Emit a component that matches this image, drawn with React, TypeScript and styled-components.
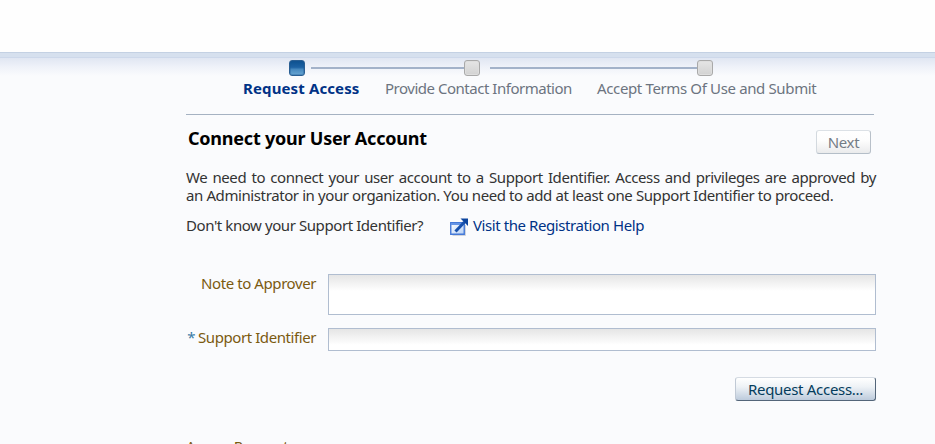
import React from "react";
import styled, { createGlobalStyle } from "styled-components";

const GlobalStyle = createGlobalStyle`
  *, *::before, *::after { box-sizing: border-box; }
  html, body { margin: 0; height: 100%; overflow: hidden; }
  body {
    background: #fafbfd;
    color: #333;
    font: 15px/18px Tahoma, "Noto Sans", sans-serif;
    letter-spacing: -0.42px;
  }
`;

const Page = styled.div`
  height: 444px;
  overflow: hidden;
`;

const Banner = styled.header`
  height: 58px;
  background: linear-gradient(#fefefe 0 52px, #c4d1e3 52px 53px, #d6e0ee 53px 57px, #cdd8ea 57px 58px);
`;

const Body = styled.main`
  height: 386px;
  padding: 2px 59px 0 186px;
  background: linear-gradient(#e0e6f2, #eff2f9 9px, #fafbfd 18px);
`;

const Train = styled.nav`
  width: 688px;
  height: 55px;
  border-bottom: 1px solid #a5b2c2;
`;

const Track = styled.div`
  display: flex;
  align-items: center;
  height: 16px;
  padding-left: 103px;
`;

const Stop = styled.span<{ $active?: boolean }>`
  width: 16px;
  height: 16px;
  border: 1px solid ${(p) => (p.$active ? "#2a5f93" : "#a9a9a9")};
  border-radius: 3px;
  background: ${(p) =>
    p.$active
      ? "linear-gradient(#0d5190, #1d62a3 45%, #4789bf 60%, #69a6d2)"
      : "linear-gradient(#e5e5e5, #d2d2d2)"};
  box-shadow: inset 0 0 0 1px ${(p) => (p.$active ? "#19589355" : "#dedede")};
`;

const Rail = styled.span<{ $width: number; $gap: number }>`
  width: ${(p) => p.$width}px;
  height: 2px;
  margin-left: ${(p) => p.$gap}px;
  background: #a3b2c9;
`;

const Labels = styled.div`
  display: flex;
  padding: 3px 0 0 57px;
`;

const StepLabel = styled.span<{ $width: number; $active?: boolean; $spacing: number }>`
  width: ${(p) => p.$width}px;
  white-space: nowrap;
  color: ${(p) => (p.$active ? "#003286" : "#6c7480")};
  font-weight: ${(p) => (p.$active ? 700 : 400)};
  letter-spacing: ${(p) => p.$spacing}px;
`;

const TitleRow = styled.div`
  display: flex;
  justify-content: space-between;
  height: 53px;
  padding: 15px 5px 0 2px;
`;

const Title = styled.h1`
  margin: -1px 0 0;
  color: #000;
  font-size: 18px;
  font-weight: 700;
  line-height: 18px;
  letter-spacing: -0.22px;
`;

const Button = styled.button<{ $primary?: boolean }>`
  display: flex;
  align-items: center;
  justify-content: center;
  width: ${(p) => (p.$primary ? 141 : 55)}px;
  height: 24px;
  padding: 0;
  border: 1px solid;
  border-color: ${(p) => (p.$primary ? "#d5dbe3 #536579 #536579 #c0c9d5" : "#dce1e6 #b8c0c9 #b4bec8 #d3d9df")};
  border-radius: 3px;
  background: ${(p) => (p.$primary ? "linear-gradient(#fff, #eef2f6 40%, #bdcbdc)" : "linear-gradient(#fff, #fdfdfd 45%, #eaebec)")};
  color: ${(p) => (p.$primary ? "#043c5c" : "#747c86")};
  font: inherit;
  letter-spacing: -0.3px;
`;

const Intro = styled.p`
  margin: 0;
  white-space: nowrap;
`;

const IntroLine = styled.span<{ $justify?: boolean }>`
  display: block;
  letter-spacing: -0.4px;
  text-align: justify;
  text-align-last: ${(p) => (p.$justify ? "justify" : "left")};
`;

const HelpRow = styled.div`
  display: flex;
  height: 58px;
  margin-top: 12px;
  white-space: nowrap;
`;

const Question = styled.span`
  width: 262px;
`;

const HelpLink = styled.a`
  display: flex;
  color: #003286;
  text-decoration: none;
  svg { margin: 1px 4px 0 2px; }
`;

const Field = styled.label`
  display: grid;
  grid-template-columns: 130px 548px;
  column-gap: 12px;
  margin-bottom: 13px;
`;

const FieldName = styled.span`
  color: #7b5a10;
  text-align: right;
  white-space: nowrap;
`;

const Required = styled.span`
  margin-right: 3px;
  color: #3a7ca6;
`;

const NoteInput = styled.textarea`
  display: block;
  width: 548px;
  height: 41px;
  border: 1px solid #b0bdd0;
  border-radius: 0;
  outline: 0;
  resize: none;
  background: linear-gradient(#e5e5e5, #fff 16px);
`;

const IdentifierInput = styled.input`
  display: block;
  width: 548px;
  height: 23px;
  border: 1px solid #b0bdd0;
  border-radius: 0;
  outline: 0;
  background: linear-gradient(#e5e5e5, #fff 16px);
`;

const Actions = styled.div`
  display: flex;
  justify-content: flex-end;
  margin-top: 26px;
`;

const SectionName = styled.h2`
  margin: 36px 0 0;
  color: #7b5a10;
  font-size: 15px;
  font-weight: 400;
  line-height: 18px;
`;

const ExternalIcon = () => (
  <svg width="19" height="20" viewBox="0 0 19 20" fill="none" aria-hidden="true">
    <defs>
      <linearGradient id="window" x1="0" y1="0" x2="1" y2="1">
        <stop stopColor="#fff" />
        <stop offset="1" stopColor="#b4cff5" />
      </linearGradient>
    </defs>
    <path d="M2.5 18.5h13V8" stroke="#b5bac5" strokeOpacity=".6" />
    <path d="M.75 5.75h13.5v11.5H.75z" fill="url(#window)" stroke="#4479d8" strokeWidth="1.4" />
    <path d="M1 7h10" stroke="#6594e5" strokeWidth="2" />
    <path d="M5.5 14.5 14.5 5" stroke="#1851ad" strokeWidth="3" />
    <path d="M10.5 1.5h7.5v7.5z" fill="#0c459e" />
  </svg>
);

export default function App() {
  return (
    <Page>
      <GlobalStyle />
      <Banner />
      <Body>
        <Train>
          <Track>
            <Stop $active />
            <Rail $width={153} $gap={6} />
            <Stop />
            <Rail $width={207} $gap={10} />
            <Stop />
          </Track>
          <Labels>
            <StepLabel $width={142} $spacing={0.12} $active>Request Access</StepLabel>
            <StepLabel $width={212} $spacing={-0.48}>Provide Contact Information</StepLabel>
            <StepLabel $width={220} $spacing={-0.36}>Accept Terms Of Use and Submit</StepLabel>
          </Labels>
        </Train>
        <TitleRow>
          <Title>Connect your User Account</Title>
          <Button disabled>Next</Button>
        </TitleRow>
        <Intro>
          <IntroLine $justify>
            We need to connect your user account to a Support Identifier. Access and privileges are approved by
          </IntroLine>
          <IntroLine>
            an Administrator in your organization. You need to add at least one Support Identifier to proceed.
          </IntroLine>
        </Intro>
        <HelpRow>
          <Question>Don't know your Support Identifier?</Question>
          <HelpLink href="#">
            <ExternalIcon />
            Visit the Registration Help
          </HelpLink>
        </HelpRow>
        <Field>
          <FieldName>Note to Approver</FieldName>
          <NoteInput />
        </Field>
        <Field>
          <FieldName><Required>*</Required>Support Identifier</FieldName>
          <IdentifierInput />
        </Field>
        <Actions>
          <Button $primary>Request Access...</Button>
        </Actions>
        <SectionName>Access Requests</SectionName>
      </Body>
    </Page>
  );
}
